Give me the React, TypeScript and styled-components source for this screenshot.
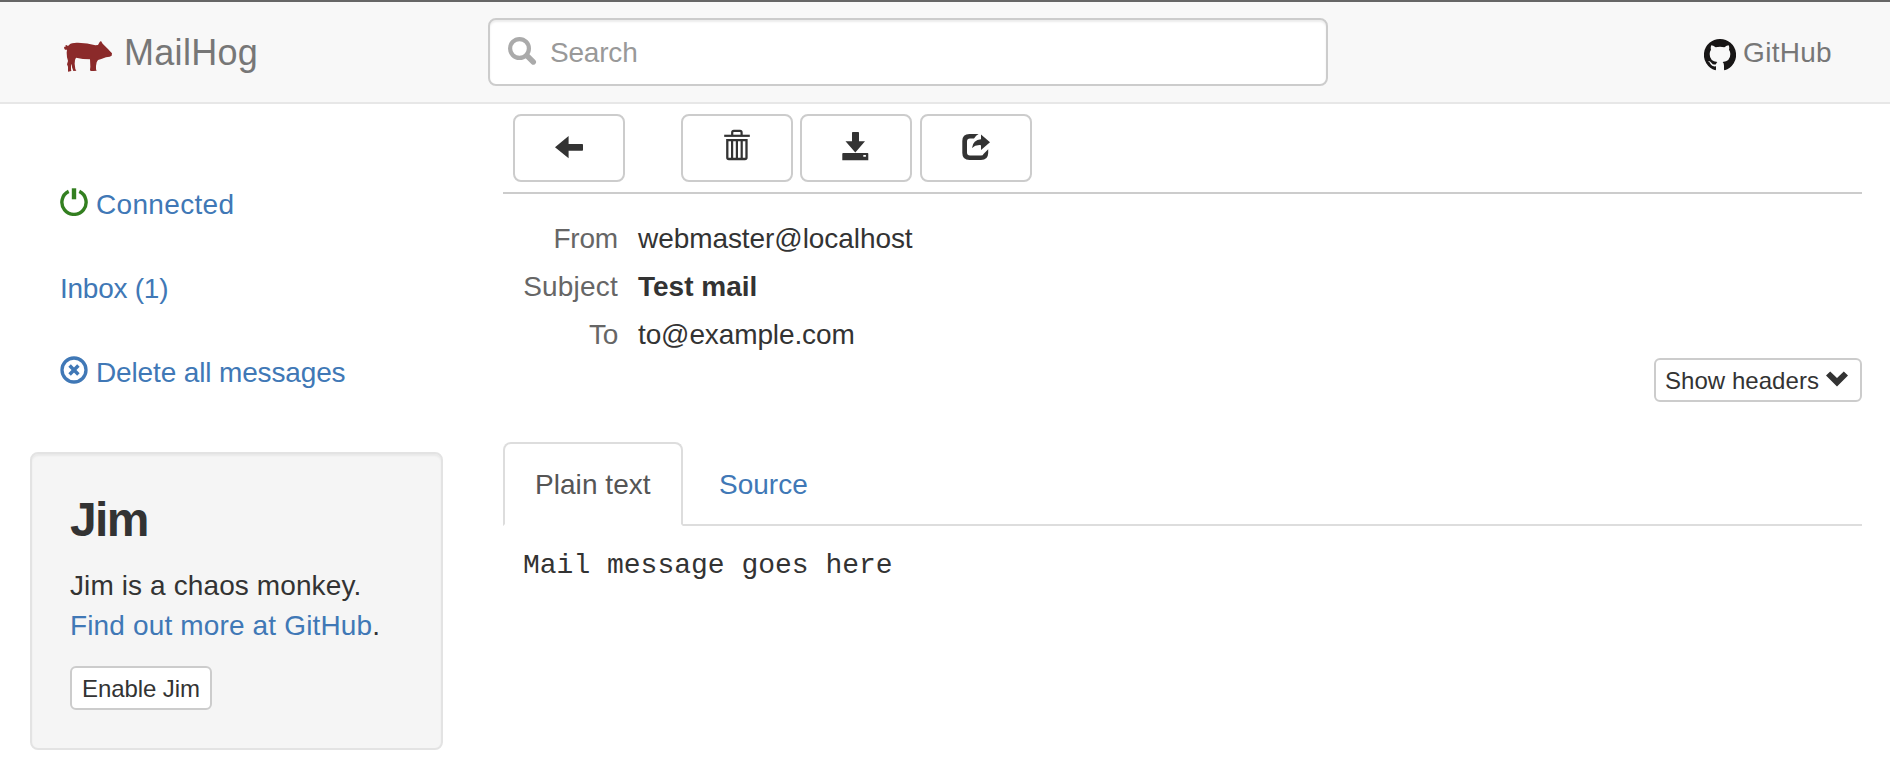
import React from "react";
import styled, { createGlobalStyle } from "styled-components";

const GlobalStyle = createGlobalStyle`
  * { box-sizing: border-box; }
  body {
    margin: 0;
    background: #fff;
    color: #333;
    font-family: "Liberation Sans", Arial, sans-serif;
    font-size: 28px;
    line-height: 40px;
  }
  a { color: #4078b6; text-decoration: none; }
`;

const Text = styled.span<{ $track?: number }>`
  display: inline-block;
  letter-spacing: ${(p) => p.$track ?? 0}px;
  white-space: nowrap;
  transform: translateY(1px);
`;

const Page = styled.div`
  height: 780px;
  border-top: 2px solid #666;
  overflow: hidden;
`;

const Navbar = styled.header`
  display: flex;
  align-items: center;
  height: 102px;
  padding: 0 58px 0 64px;
  background: #f8f8f8;
  border-bottom: 2px solid #e7e7e7;
  color: #777;
`;

const Brand = styled.div`
  display: flex;
  align-items: center;
  width: 424px;
  gap: 11px;
  font-size: 36px;
  svg { margin-top: 9px; }
`;

const SearchBox = styled.div`
  display: flex;
  align-items: center;
  width: 840px;
  height: 68px;
  padding-left: 18px;
  gap: 13px;
  background: #fff;
  border: 2px solid #ccc;
  border-radius: 8px;
  box-shadow: inset 0 2px 2px rgba(0, 0, 0, 0.075);
  color: #999;
  svg { margin-top: -2px; }
`;

const GitHubLink = styled.div`
  display: flex;
  align-items: center;
  margin-left: auto;
  gap: 7px;
  svg { margin-top: 5px; }
`;

const Body = styled.div`
  display: flex;
  gap: 60px;
  padding: 0 28px 0 30px;
`;

const Sidebar = styled.aside`
  width: 413px;
  padding-top: 58px;
`;

const Nav = styled.nav`
  padding-left: 30px;
  margin-bottom: 38px;
`;

const NavItem = styled.a`
  display: flex;
  align-items: center;
  height: 84px;
  gap: 8px;
  svg { margin-top: -5px; }
`;

const Well = styled.section`
  height: 298px;
  padding: 38px;
  background: #f5f5f5;
  border: 2px solid #e3e3e3;
  border-radius: 8px;
  box-shadow: inset 0 2px 2px rgba(0, 0, 0, 0.05);
`;

const WellTitle = styled.h3`
  height: 53px;
  margin: 0 0 20px;
  font-size: 48px;
  line-height: 53px;
  font-weight: 700;
`;

const WellText = styled.p`
  height: 80px;
  margin: 0 0 21px;
`;

const SmallButton = styled.button<{ $withIcon?: boolean }>`
  display: flex;
  align-items: center;
  height: 44px;
  padding: ${(p) => (p.$withIcon ? "0 12px 0 9px" : "0 10px")};
  gap: 7px;
  font: 24px/36px "Liberation Sans", Arial, sans-serif;
  color: #333;
  background: #fff;
  border: 2px solid #ccc;
  border-radius: 6px;
  svg { margin-top: -2px; }
`;

const Content = styled.main`
  flex: 1;
`;

const Toolbar = styled.div`
  display: flex;
  gap: 7px;
  height: 90px;
  padding: 10px 0 0 10px;
  border-bottom: 2px solid #ccc;
`;

const ToolButton = styled.button<{ $gapAfter?: number; $lift?: number }>`
  display: flex;
  align-items: center;
  justify-content: center;
  width: 112px;
  height: 68px;
  margin-right: ${(p) => p.$gapAfter ?? 0}px;
  padding: 0 0 ${(p) => p.$lift ?? 0}px;
  background: #fff;
  border: 2px solid #ccc;
  border-radius: 8px;
`;

const Fields = styled.dl`
  display: grid;
  grid-template-columns: 115px 1fr;
  grid-auto-rows: 48px;
  column-gap: 20px;
  align-items: center;
  margin: 20px 0 0;
`;

const FieldName = styled.dt`
  height: 40px;
  color: #666;
  text-align: right;
`;

const FieldValue = styled.dd<{ $strong?: boolean }>`
  height: 40px;
  margin: 0;
  font-weight: ${(p) => (p.$strong ? 700 : 400)};
`;

const HeaderActions = styled.div`
  display: flex;
  justify-content: flex-end;
  margin-bottom: 40px;
`;

const Tabs = styled.div`
  display: flex;
  height: 84px;
`;

const Tab = styled.div<{ $active?: boolean }>`
  display: flex;
  align-items: center;
  padding: 0 30px;
  border: 2px solid ${(p) => (p.$active ? "#ddd" : "transparent")};
  border-bottom-color: ${(p) => (p.$active ? "transparent" : "#ddd")};
  border-radius: ${(p) => (p.$active ? "8px 8px 0 0" : "0")};
  color: ${(p) => (p.$active ? "#555" : "#4078b6")};
  ${(p) =>
    p.$active
      ? "width: 180px;"
      : "flex: 1; padding-left: 36px; border-left: 0; border-right: 0;"}
`;

const Message = styled.pre`
  margin: 0;
  padding: 20px;
  font-family: "Liberation Mono", "Courier New", monospace;
  font-size: 28px;
  line-height: 40px;
`;

const PigLogo = () => (
  <svg width="49" height="31" viewBox="42 33 147 93" fill="#8b2a2a">
    <path d="M58 44 Q64 39 80 38.5 Q112 38 136 46 L144 45 L149 36 L153 33 L158 41 L164 47 L174 57 L180 64 L186 70 L185 77 L179 80 L168 82 L154 87 L144 90 L140 97 L138 108 L138 118 L140 122 L131 123 L122 123 L120 120 L121 110 L120 88 Q98 88 78 83 L75 90 L74 101 L76 117 L79 122 L70 123 L66 112 L65 101 L63 108 L63 118 L64 123 L54 125 L54 110 L51 103 L54 93 L51 82 L50 68 L51 59 L45 59 L42 54 L43 50 L48 51 L45 48 L49 45 L54 48 Z" />
  </svg>
);

const SearchIcon = () => (
  <svg width="29" height="28" viewBox="0 0 29 28" fill="none" stroke="#aaa">
    <circle cx="11.5" cy="11.5" r="9.4" strokeWidth="4.2" />
    <path d="M18.8 18.5 L25.3 25" strokeWidth="5.4" strokeLinecap="round" />
  </svg>
);

const GitHubMark = () => (
  <svg width="32" height="32" viewBox="0 0 96 96">
    <path
      fill="#181616"
      d="M48 0 A48 48 0 0 1 62 94 Q60 94 60 91 V80 Q60 72 56 69 Q79 67 79 45 Q79 37 75 32 Q77 26 74 19 Q69 19 61 25 Q48 22 35 25 Q27 19 22 19 Q19 26 21 32 Q17 37 17 45 Q17 67 40 69 Q37 71 36 76 Q27 79 22 71 Q18 65 12 66 Q17 69 20 76 Q24 84 36 82 V91 Q36 94 34 94 A48 48 0 0 1 48 0 Z"
    />
  </svg>
);

const PowerIcon = () => (
  <svg width="28" height="28" viewBox="0 0 28 28" fill="none" stroke="#337f20">
    <path d="M8.7 3.4 A12.1 12.1 0 1 0 19.3 3.4" strokeWidth="3.4" />
    <path d="M14 0.3 V11.3" strokeWidth="4.4" />
  </svg>
);

const RemoveIcon = () => (
  <svg width="28" height="28" viewBox="0 0 28 28" fill="none" stroke="#4078b6">
    <circle cx="14" cy="14" r="12" strokeWidth="3.3" />
    <path d="M9.6 9.6 L18.4 18.4 M18.4 9.6 L9.6 18.4" strokeWidth="3.5" />
  </svg>
);

const ArrowLeftIcon = () => (
  <svg width="28" height="28" viewBox="0 0 28 28" fill="#333">
    <path d="M0 13.2 L13.6 2 V10 H27.2 Q28 10 28 10.8 V16 Q28 16.8 27.2 16.8 H13.6 V24.3 Z" />
  </svg>
);

const TrashIcon = () => (
  <svg width="28" height="32" viewBox="0 0 28 32" fill="none" stroke="#333">
    <path d="M1.2 6.8 H26.8" strokeWidth="2.2" />
    <path d="M9.2 6 V3.4 Q9.2 1.8 10.8 1.8 H17 Q18.6 1.8 18.6 3.4 V6" strokeWidth="2.2" />
    <path d="M4.3 11.2 H23.5 V28.4 Q23.5 30 21.9 30 H5.9 Q4.3 30 4.3 28.4 Z" strokeWidth="2.3" />
    <path d="M9.1 11 V30 M13.9 11 V30 M18.7 11 V30" strokeWidth="2.2" />
  </svg>
);

const SaveIcon = () => (
  <svg width="28" height="30" viewBox="0 0 28 30" fill="#333">
    <path d="M10 0.8 Q10 0 10.8 0 H16.2 Q17 0 17 0.8 V9.3 H23 L13.3 20.4 L3.5 9.3 H10 Z" />
    <path
      fillRule="evenodd"
      d="M1.2 21 H25.5 Q26.3 21 26.3 21.8 V28.2 H0.3 V21.8 Q0.3 21 1.2 21 Z M21.3 23 V24.8 H23.9 V23 Z"
    />
  </svg>
);

const ShareIcon = () => (
  <svg width="28" height="28" viewBox="0 0 28 28" fill="#333">
    <path d="M16.6 1 H7.5 Q0.3 1 0.3 8 V20 Q0.3 27 7.5 27 H19 Q26 27 26.2 20 V16.2 L21.5 21 Q21 22.6 19 22.6 H8 Q5 22.6 5 19.6 V8.6 Q5 5.4 8 5.4 H12 Q14 2.2 16.6 1 Z" />
    <path d="M19 1.5 L28 9.2 L19 16.9 V12.2 Q13.5 11.6 10 14.9 Q11 6.9 19 6.3 Z" />
  </svg>
);

const ChevronDownIcon = () => (
  <svg width="22" height="16" viewBox="0 0 22 16" fill="#333">
    <path d="M0 4.4 L4.2 0.4 L11 7 L17.8 0.4 L22 4.4 L11 15.4 Z" />
  </svg>
);

export default function App() {
  return (
    <Page>
      <GlobalStyle />
      <Navbar>
        <Brand>
          <PigLogo />
          <Text $track={0.3}>MailHog</Text>
        </Brand>
        <SearchBox>
          <SearchIcon />
          <Text $track={-0.2}>Search</Text>
        </SearchBox>
        <GitHubLink>
          <GitHubMark />
          <Text $track={0.3}>GitHub</Text>
        </GitHubLink>
      </Navbar>
      <Body>
        <Sidebar>
          <Nav>
            <NavItem>
              <PowerIcon />
              <Text $track={0.33}>Connected</Text>
            </NavItem>
            <NavItem>
              <Text $track={-0.25}>Inbox (1)</Text>
            </NavItem>
            <NavItem>
              <RemoveIcon />
              <Text $track={-0.14}>Delete all messages</Text>
            </NavItem>
          </Nav>
          <Well>
            <WellTitle><Text $track={-1.6}>Jim</Text></WellTitle>
            <WellText>
              <Text $track={0.11}>Jim is a chaos monkey.</Text>
              <br />
              <Text $track={0.15}><a>Find out more at GitHub</a>.</Text>
            </WellText>
            <SmallButton><Text $track={-0.08}>Enable Jim</Text></SmallButton>
          </Well>
        </Sidebar>
        <Content>
          <Toolbar>
            <ToolButton $gapAfter={49}><ArrowLeftIcon /></ToolButton>
            <ToolButton $lift={6}><TrashIcon /></ToolButton>
            <ToolButton $gapAfter={1} $lift={2}><SaveIcon /></ToolButton>
            <ToolButton $lift={2}><ShareIcon /></ToolButton>
          </Toolbar>
          <Fields>
            <FieldName><Text $track={-0.2}>From</Text></FieldName>
            <FieldValue><Text $track={-0.07}>webmaster@localhost</Text></FieldValue>
            <FieldName><Text $track={0.2}>Subject</Text></FieldName>
            <FieldValue $strong><Text>Test mail</Text></FieldValue>
            <FieldName><Text $track={-0.3}>To</Text></FieldName>
            <FieldValue><Text $track={-0.12}>to@example.com</Text></FieldValue>
          </Fields>
          <HeaderActions>
            <SmallButton $withIcon>
              <Text $track={0.05}>Show headers</Text>
              <ChevronDownIcon />
            </SmallButton>
          </HeaderActions>
          <Tabs>
            <Tab $active><Text $track={0.05}>Plain text</Text></Tab>
            <Tab><Text>Source</Text></Tab>
          </Tabs>
          <Message>Mail message goes here</Message>
        </Content>
      </Body>
    </Page>
  );
}
